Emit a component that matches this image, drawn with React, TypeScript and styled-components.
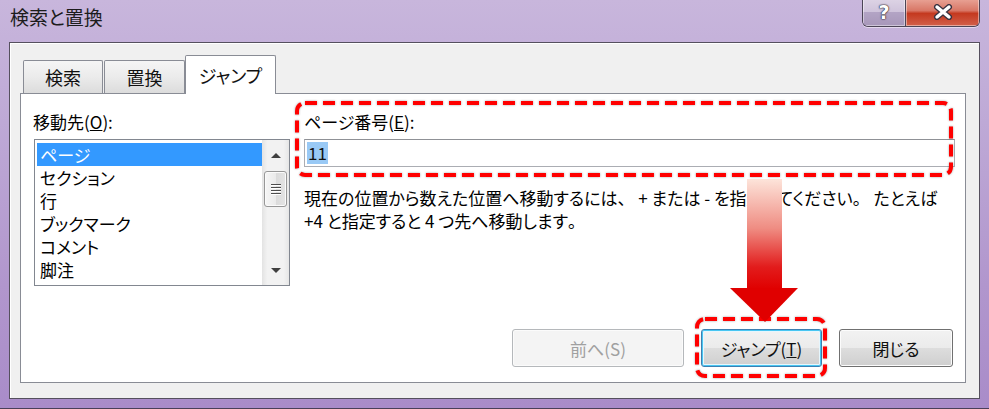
import styled, { createGlobalStyle } from 'styled-components'

const GlobalStyle = createGlobalStyle`
  html, body {
    margin: 0;
    padding: 0;
  }
  body {
    font-family: "Noto Sans CJK JP", "Noto Sans", sans-serif;
    color: #000;
  }
`

const JUMP_TARGETS = ['ページ', 'セクション', '行', 'ブックマーク', 'コメント', '脚注']

function CloseGlyph() {
  return (
    <svg width="22" height="16" viewBox="0 0 22 16">
      <path d="M5 3 L17 13 M17 3 L5 13" stroke="#3a3340" strokeWidth="6" strokeLinecap="round" />
      <path d="M5 3 L17 13 M17 3 L5 13" stroke="#fff" strokeWidth="3.4" strokeLinecap="round" />
    </svg>
  )
}

function DownArrow() {
  return (
    <svg width="68" height="143" viewBox="0 0 68 143">
      <defs>
        <linearGradient id="shaft" x1="0" y1="0" x2="0" y2="1">
          <stop offset="0" stopColor="#fde4da" />
          <stop offset="0.45" stopColor="#ef8c82" />
          <stop offset="0.8" stopColor="#e21c1c" />
          <stop offset="1" stopColor="#e00000" />
        </linearGradient>
      </defs>
      <rect x="17" y="0" width="35" height="110" fill="url(#shaft)" />
      <polygon points="0,109 68,109 35,143" fill="#e00000" />
    </svg>
  )
}

type HighlightProps = { inset: string }

function Highlight({ inset }: HighlightProps) {
  return (
    <HighlightFrame $inset={inset}>
      <svg width="100%" height="100%">
        <DashRect x="2" y="2" rx="8" ry="8" />
      </svg>
    </HighlightFrame>
  )
}

export default function App() {
  return (
    <>
      <GlobalStyle />
      <Window>
        <TitleBar>
          <Title>検索と置換</Title>
          <CaptionGroup>
            <CaptionButton $variant="help">?</CaptionButton>
            <CaptionButton $variant="close">
              <CloseGlyph />
            </CaptionButton>
          </CaptionGroup>
        </TitleBar>

        <Client>
          <TabStrip>
            <Tab $width={80}>検索</Tab>
            <Tab $width={81}>置換</Tab>
            <Tab $width={91} $active>
              ジャンプ
            </Tab>
          </TabStrip>

          <Panel>
            <TopRow>
              <LeftColumn>
                <FieldLabel>
                  移動先(<u>O</u>):
                </FieldLabel>
                <ListBox>
                  <Items>
                    {JUMP_TARGETS.map((item, i) => (
                      <Item key={item} $selected={i === 0}>
                        {item}
                      </Item>
                    ))}
                  </Items>
                  <ScrollBar>
                    <ScrollArrow>
                      <Triangle $dir="up" />
                    </ScrollArrow>
                    <Thumb>
                      <Grip />
                      <Grip />
                      <Grip />
                      <Grip />
                    </Thumb>
                    <ScrollSpacer />
                    <ScrollArrow>
                      <Triangle $dir="down" />
                    </ScrollArrow>
                  </ScrollBar>
                </ListBox>
              </LeftColumn>

              <RightColumn>
                <FieldGroup>
                  <FieldLabel>
                    ページ番号(<u>E</u>):
                  </FieldLabel>
                  <TextBox>
                    <Selection>11</Selection>
                  </TextBox>
                  <Highlight inset="-10px 2px -10px -9px" />
                </FieldGroup>
                <Hint>
                  現在の位置から数えた位置へ移動するには<Punct>、</Punct> + または - を指定してください<Punct>。</Punct> たとえば
                  <br />
                  +4 と指定すると 4 つ先へ移動します<Punct>。</Punct>
                </Hint>
              </RightColumn>
            </TopRow>

            <ButtonRow>
              <DialogButton $width={172} disabled>
                前へ(S)
              </DialogButton>
              <ButtonSlot>
                <DialogButton $width={121} $focused>
                  ジャンプ(<u>T</u>)
                </DialogButton>
                <Highlight inset="-12px -5px -11px -6px" />
              </ButtonSlot>
              <DialogButton $width={114}>閉じる</DialogButton>
            </ButtonRow>

            <ArrowOverlay>
              <DownArrow />
            </ArrowOverlay>
          </Panel>
        </Client>
      </Window>
    </>
  )
}

const Window = styled.div`
  width: 989px;
  height: 409px;
  box-sizing: border-box;
  display: flex;
  flex-direction: column;
  overflow: hidden;
  background: linear-gradient(180deg, #c8b6dc 0%, #bea9d6 30%, #b196cd 70%, #a98cc9 100%);
  border-bottom: 1px solid #4a4058;
`

const TitleBar = styled.div`
  height: 42px;
  flex-shrink: 0;
  display: flex;
  align-items: flex-start;
`

const Title = styled.div`
  padding: 5px 0 0 10px;
  font-size: 19px;
  line-height: 24px;
  color: #1c1c1c;
  font-feature-settings: 'palt';
`

const CaptionGroup = styled.div`
  display: flex;
  margin-left: auto;
  margin-right: 9px;
  margin-top: -2px;
  border: 1px solid #4c4556;
  border-top: none;
  border-radius: 0 0 6px 6px;
  overflow: hidden;
  box-shadow: 0 1px 0 rgba(255, 255, 255, 0.5);
`

const CaptionButton = styled.div<{ $variant: 'help' | 'close' }>`
  height: 28px;
  width: ${(p) => (p.$variant === 'help' ? '42px' : '73px')};
  display: flex;
  align-items: center;
  justify-content: center;
  font-family: 'DejaVu Sans', sans-serif;
  font-weight: bold;
  font-size: 19px;
  color: #fff;
  text-shadow: 0 0 2px #2c2733, 0 0 1px #2c2733, 0 0 1px #2c2733;
  box-shadow: inset 0 0 0 1px rgba(255, 255, 255, 0.45);
  background: ${(p) =>
    p.$variant === 'help'
      ? 'linear-gradient(180deg, #ded5e6 0%, #cfc3db 50%, #b3a4c5 51%, #a797b9 100%)'
      : 'linear-gradient(180deg, #eaa79a 0%, #d87766 45%, #c4391f 55%, #d2604a 100%)'};
  border-left: ${(p) => (p.$variant === 'close' ? '1px solid #4c4556' : 'none')};
`

const Client = styled.div`
  flex: 1;
  margin: 0 9px 9px;
  display: flex;
  flex-direction: column;
  padding: 12px 13px 15px 10px;
  background: #f0f0f0;
  border: 1px solid #55505e;
  box-shadow: inset 1px 1px 0 #ffffff;
`

const TabStrip = styled.div`
  height: 38px;
  display: flex;
  align-items: flex-end;
  padding-left: 3px;
  position: relative;
  z-index: 1;
`

const Tab = styled.div<{ $width: number; $active?: boolean }>`
  box-sizing: border-box;
  width: ${(p) => p.$width}px;
  height: ${(p) => (p.$active ? '39px' : '33px')};
  margin-bottom: ${(p) => (p.$active ? '-1px' : '0')};
  margin-right: ${(p) => (p.$active ? '0' : '1px')};
  margin-left: ${(p) => (p.$active ? '-1px' : '0')};
  display: flex;
  align-items: center;
  justify-content: center;
  font-size: 18px;
  font-feature-settings: 'palt';
  color: #111;
  border: 1px solid #898c95;
  border-bottom: none;
  border-radius: 2px 2px 0 0;
  background: ${(p) => (p.$active ? '#ffffff' : 'linear-gradient(180deg, #f5f5f5 0%, #ebebeb 50%, #dcdcdc 100%)')};
`

const Panel = styled.div`
  flex: 1;
  position: relative;
  display: flex;
  flex-direction: column;
  padding: 17px 10px 15px 12px;
  background: #ffffff;
  border: 1px solid #898c95;
`

const TopRow = styled.div`
  display: flex;
  gap: 14px;
`

const LeftColumn = styled.div`
  width: 257px;
  display: flex;
  flex-direction: column;
`

const RightColumn = styled.div`
  flex: 1;
  display: flex;
  flex-direction: column;
`

const FieldLabel = styled.div`
  height: 22px;
  line-height: 22px;
  margin-bottom: 6px;
  font-size: 17px;
  font-feature-settings: 'palt';
  white-space: nowrap;
`

const ListBox = styled.div`
  box-sizing: border-box;
  margin-left: 1px;
  width: 256px;
  height: 147px;
  display: flex;
  border: 1px solid #828790;
  background: #fff;
`

const Items = styled.div`
  flex: 1;
  padding: 3px 0 0 2px;
  overflow: hidden;
`

const Item = styled.div<{ $selected?: boolean }>`
  height: 23px;
  line-height: 23px;
  padding-left: 3px;
  font-size: 17px;
  font-feature-settings: 'palt';
  white-space: nowrap;
  color: ${(p) => (p.$selected ? '#fff' : '#000')};
  background: ${(p) => (p.$selected ? '#3399ff' : 'transparent')};
`

const ScrollBar = styled.div`
  width: 27px;
  display: flex;
  flex-direction: column;
  background: linear-gradient(90deg, #e3e3e3 0%, #f2f2f2 20%, #f2f2f2 80%, #e6e6e6 100%);
`

const ScrollArrow = styled.div`
  height: 30px;
  display: flex;
  align-items: center;
  justify-content: center;
`

const Triangle = styled.div<{ $dir: 'up' | 'down' }>`
  width: 0;
  height: 0;
  border-left: 5px solid transparent;
  border-right: 5px solid transparent;
  ${(p) => (p.$dir === 'up' ? 'border-bottom: 5px solid #404040;' : 'border-top: 5px solid #404040;')}
`

const Thumb = styled.div`
  height: 36px;
  margin: 1px 2px 0;
  box-sizing: border-box;
  display: flex;
  flex-direction: column;
  align-items: center;
  justify-content: center;
  gap: 2px;
  border: 1px solid #979797;
  border-radius: 3px;
  background: linear-gradient(90deg, #f6f6f6 0%, #ebebeb 50%, #dbdbdb 51%, #e4e4e4 100%);
  box-shadow: inset 0 0 0 1px #fbfbfb;
`

const Grip = styled.div`
  width: 10px;
  height: 1px;
  background: #4d4d4d;
  box-shadow: 0 1px 0 #fff;
`

const ScrollSpacer = styled.div`
  flex: 1;
`

const FieldGroup = styled.div`
  position: relative;
`

const TextBox = styled.div`
  box-sizing: border-box;
  height: 28px;
  display: flex;
  align-items: center;
  padding-left: 2px;
  border: 1px solid #abadb3;
  border-top-color: #8f9196;
  background: #fff;
`

const Selection = styled.span`
  font-size: 17px;
  line-height: 22px;
  padding: 0 1px;
  background: #99c9f5;
  color: #111;
`

const Hint = styled.div`
  margin-top: 19px;
  font-size: 17px;
  line-height: 23px;
  font-feature-settings: 'palt';
  white-space: nowrap;
`

const Punct = styled.span`
  font-feature-settings: normal;
`

const ButtonRow = styled.div`
  margin-top: auto;
  margin-right: 2px;
  display: flex;
  justify-content: flex-end;
  gap: 17px;
`

const ButtonSlot = styled.div`
  position: relative;
  display: flex;
`

const DialogButton = styled.button<{ $width: number; $focused?: boolean }>`
  box-sizing: border-box;
  width: ${(p) => p.$width}px;
  height: 38px;
  padding: 0;
  font-family: inherit;
  font-size: 17px;
  font-feature-settings: 'palt';
  color: #111;
  border-radius: 3px;
  border: 1px solid ${(p) => (p.$focused ? '#3c7fb1' : '#707070')};
  background: linear-gradient(180deg, #f2f2f2 0%, #ebebeb 50%, #dddddd 51%, #cfcfcf 100%);
  box-shadow: ${(p) => (p.$focused ? 'inset 0 0 0 1px #48c6f2, inset 0 0 0 2px #e6f6fd' : 'inset 0 0 0 1px #fcfcfc')};

  &:disabled {
    color: #a0a0a0;
    border-color: #b5b8bb;
    background: #f4f4f4;
    box-shadow: inset 0 0 0 1px #fbfbfb;
  }
`

const HighlightFrame = styled.div<{ $inset: string }>`
  position: absolute;
  inset: ${(p) => p.$inset};
  pointer-events: none;
  filter: drop-shadow(0 0 1px rgba(0, 0, 0, 0.35));

  svg {
    display: block;
    overflow: visible;
  }
`

const DashRect = styled.rect`
  width: calc(100% - 4px);
  height: calc(100% - 4px);
  fill: none;
  stroke: #ff0000;
  stroke-width: 4px;
  stroke-dasharray: 12 6;
`

const ArrowOverlay = styled.div`
  position: absolute;
  left: 709px;
  top: 85px;
  width: 68px;
  height: 143px;
  pointer-events: none;

  svg {
    display: block;
  }
`
